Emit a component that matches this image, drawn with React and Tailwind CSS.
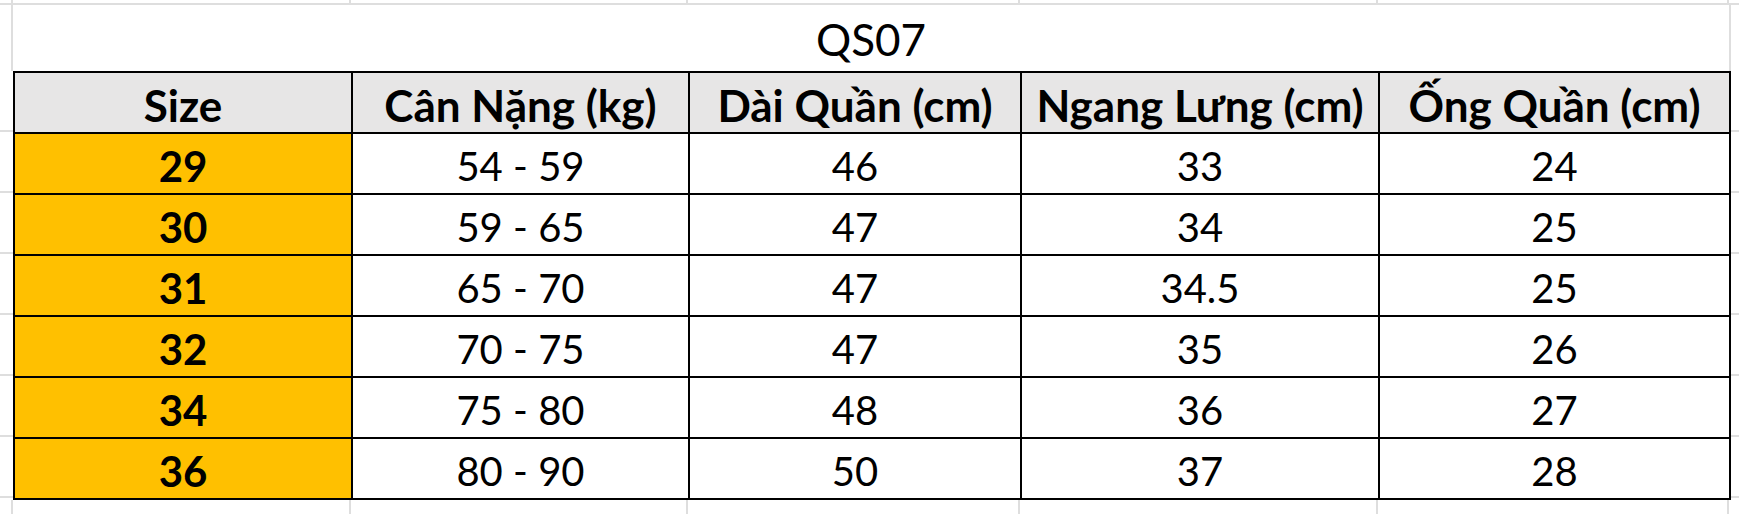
const cols = ['w-[338px]', 'w-[337px]', 'w-[332px]', 'w-[358px]', 'w-[351px]'];

const header = ['Size', 'Cân Nặng (kg)', 'Dài Quần (cm)', 'Ngang Lưng (cm)', 'Ống Quần (cm)'];

const rows = [
  ['29', '54 - 59', '46', '33', '24'],
  ['30', '59 - 65', '47', '34', '25'],
  ['31', '65 - 70', '47', '34.5', '25'],
  ['32', '70 - 75', '47', '35', '26'],
  ['34', '75 - 80', '48', '36', '27'],
  ['36', '80 - 90', '50', '37', '28'],
];

function Gutter({ className }) {
  return (
    <div className={`flex flex-col ${className}`}>
      {Array.from({ length: 7 }).map((_, i) => (
        <div key={i} className="h-[61px] border-b-2 border-[#dedede]" />
      ))}
    </div>
  );
}

function GridStrip({ height }) {
  // empty spreadsheet cells above / below the table
  return (
    <div className={`flex ${height}`}>
      <div className="w-[13px] border-r-2 border-[#dedede]" />
      {cols.map((w, i) => (
        <div key={i} className={`${w} border-r-2 border-[#dedede]`} />
      ))}
      <div className="flex-1" />
    </div>
  );
}

export default function App() {
  return (
    <div
      className="w-[1739px] h-[514px] bg-white overflow-hidden text-black"
      style={{ fontFamily: 'Lato, "Noto Sans", sans-serif' }}
    >
      {/* row above title */}
      <div className="border-b-2 border-[#dedede]">
        <GridStrip height="h-[3px]" />
      </div>

      {/* title */}
      <div className="flex h-[66px]">
        <div className="w-[13px] border-r-2 border-[#dedede]" />
        <div className="w-[1716px] flex items-center justify-center text-[44px] leading-none pt-[2px]">
          QS07
        </div>
        <div className="flex-1 border-l-2 border-[#dedede]" />
      </div>

      {/* table */}
      <div className="flex">
        <Gutter className="w-[13px]" />
        <div className="border-t-2 border-l-2 border-black">
          <div className="flex bg-[#e7e6e6]">
            {header.map((h, i) => (
              <div
                key={i}
                className={`${cols[i]} h-[61px] border-r-2 border-b-2 border-black flex items-center justify-center font-bold text-[44px] leading-none pt-[4px] whitespace-nowrap`}
              >
                {h}
              </div>
            ))}
          </div>
          {rows.map((r, ri) => (
            <div key={ri} className="flex">
              {r.map((v, i) => (
                <div
                  key={i}
                  className={`${cols[i]} h-[61px] border-r-2 border-b-2 border-black flex items-center justify-center leading-none pt-[4px] ${
                    i === 0 ? 'bg-[#ffc000] font-bold text-[42px]' : 'bg-white text-[40px]'
                  }`}
                >
                  {v}
                </div>
              ))}
            </div>
          ))}
        </div>
        <Gutter className="flex-1" />
      </div>

      {/* empty cells below */}
      <GridStrip height="h-[20px]" />
    </div>
  );
}
